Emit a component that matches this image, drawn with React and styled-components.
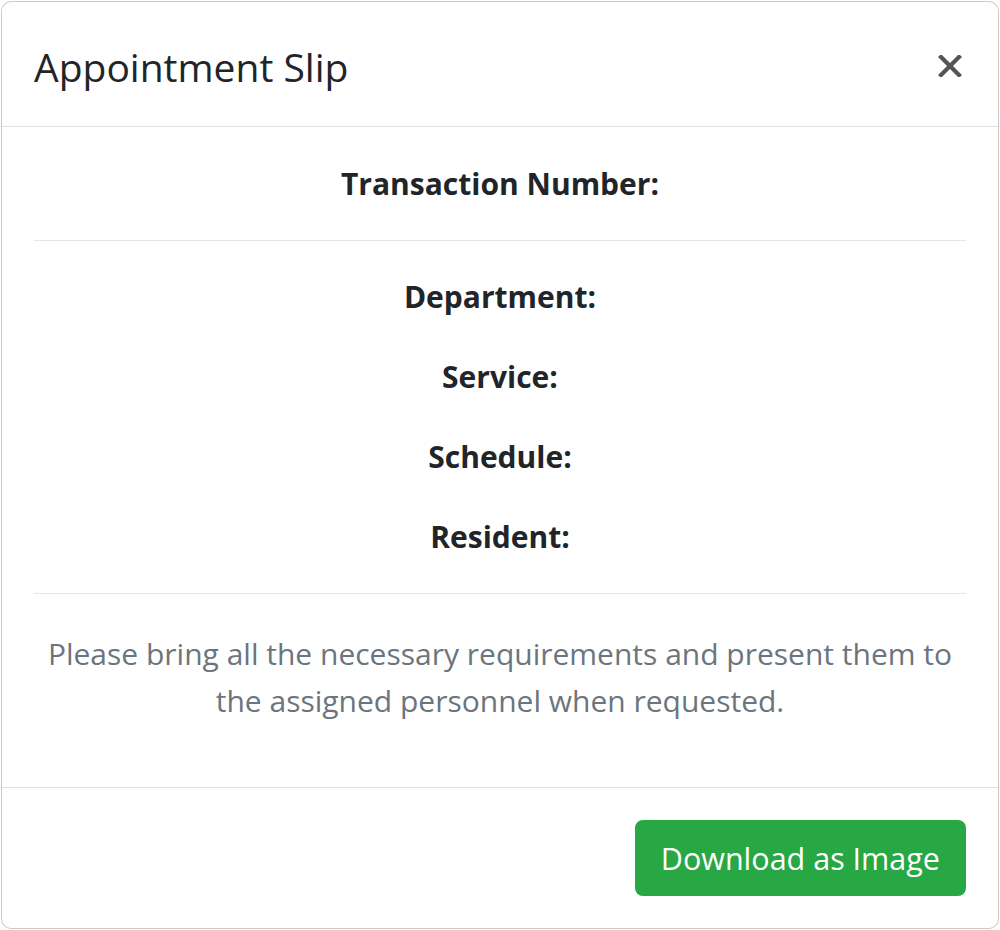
import React from "react";
import styled, { createGlobalStyle } from "styled-components";

const GlobalStyle = createGlobalStyle`
  * {
    box-sizing: border-box;
  }
  body {
    margin: 0;
    background: #ffffff;
    font-family: "Open Sans", "Liberation Sans", sans-serif;
    color: #212529;
  }
`;

const FIELDS = ["Department:", "Service:", "Schedule:", "Resident:"];

export default function App() {
  return (
    <>
      <GlobalStyle />
      <Modal>
        <Header>
          <Title>Appointment Slip</Title>
          <CloseButton type="button" aria-label="Close">
            <svg width="24" height="22" viewBox="0 0 24 22">
              <path
                d="M3 2 L21 20 M21 2 L3 20"
                stroke="#555555"
                strokeWidth="4.2"
                strokeLinecap="square"
                fill="none"
              />
            </svg>
          </CloseButton>
        </Header>
        <Body>
          <Field>Transaction Number:</Field>
          <Divider />
          <Fields>
            {FIELDS.map((label) => (
              <Field key={label}>{label}</Field>
            ))}
          </Fields>
          <Divider />
          <Note>
            Please bring all the necessary requirements and present them to
            the assigned personnel when requested.
          </Note>
        </Body>
        <Footer>
          <Button type="button">Download as Image</Button>
        </Footer>
      </Modal>
    </>
  );
}

const Modal = styled.div`
  width: 998px;
  margin: 1px 0 0 1px;
  background: #ffffff;
  border: 1px solid rgba(0, 0, 0, 0.2);
  border-radius: 10px;
  display: flex;
  flex-direction: column;
`;

const Header = styled.div`
  display: flex;
  align-items: flex-start;
  justify-content: space-between;
  padding: 32px;
  border-bottom: 1px solid #dee2e6;
`;

const Title = styled.h5`
  margin: 3px 0 -3px;
  font-size: 39px;
  font-weight: 500;
  line-height: 60px;
  color: #212529;
`;

const CloseButton = styled.button`
  margin: 21px 4px 0 auto;
  padding: 0;
  width: 24px;
  height: 22px;
  border: 0;
  background: transparent;
  cursor: pointer;
  display: flex;

  svg {
    display: block;
  }
`;

const Body = styled.div`
  padding: 33px 32px 32px;
  text-align: center;
`;

const Fields = styled.div`
  display: flex;
  flex-direction: column;
  gap: 32px;
`;

const Field = styled.p`
  margin: 0;
  font-size: 30px;
  font-weight: 700;
  line-height: 48px;
  color: #212529;
`;

const Divider = styled.hr`
  margin: 32px 0;
  border: 0;
  border-top: 1px solid rgba(0, 0, 0, 0.1);
`;

const Note = styled.p`
  margin: 0 0 31px;
  padding-top: 4px;
  font-size: 30px;
  line-height: 47px;
  color: #6c757d;
`;

const Footer = styled.div`
  display: flex;
  justify-content: flex-end;
  align-items: center;
  padding: 32px;
  border-top: 1px solid #dee2e6;
`;

const Button = styled.button`
  font-family: "Open Sans", "Liberation Sans", sans-serif;
  font-size: 30.5px;
  line-height: 48px;
  padding: 12px 24px;
  color: #ffffff;
  background: #28a745;
  border: 2px solid #28a745;
  border-radius: 8px;
  cursor: pointer;
`;
